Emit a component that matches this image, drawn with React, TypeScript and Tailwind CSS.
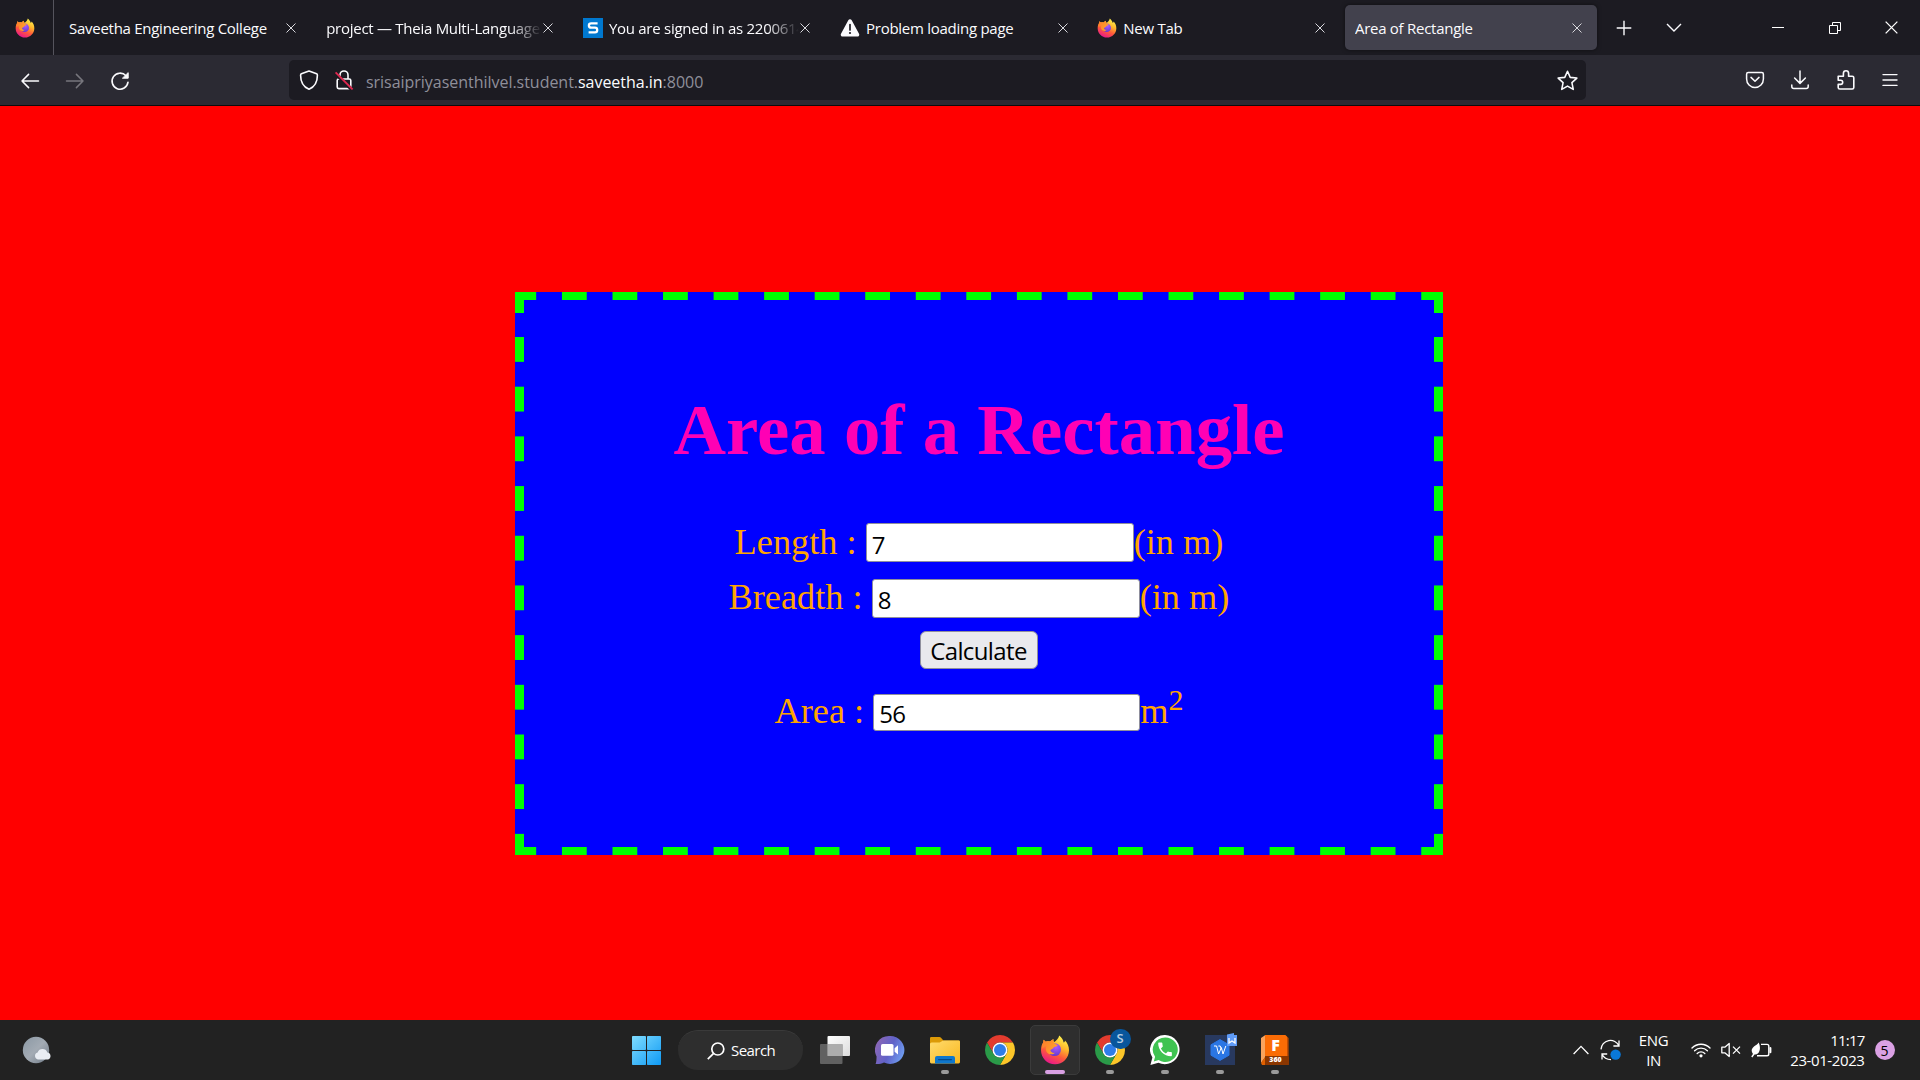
import type { ReactNode } from "react";

function FirefoxLogo({ className }: { className: string }) {
  return (
    <svg viewBox="0 0 30 30" className={className}>
      <defs>
        <linearGradient id="fxBody" x1="0.8" y1="0.05" x2="0.35" y2="1">
          <stop offset="0" stopColor="#fff44f" />
          <stop offset="0.35" stopColor="#ffb62b" />
          <stop offset="0.65" stopColor="#ff5a3a" />
          <stop offset="1" stopColor="#e8178b" />
        </linearGradient>
        <radialGradient id="fxCore" cx="0.6" cy="0.3" r="0.8">
          <stop offset="0" stopColor="#a95cff" />
          <stop offset="1" stopColor="#5b35c9" />
        </radialGradient>
        <linearGradient id="fxHead" x1="0" y1="0" x2="1" y2="0.6">
          <stop offset="0" stopColor="#ff7a2a" />
          <stop offset="1" stopColor="#ffa52b" />
        </linearGradient>
      </defs>
      <path
        d="M19.2 0.6C22 3 23.4 5.4 23.6 7.6C24.6 7 25 6.2 25 5.4C27.6 8 29 11.6 29 15.2C29 23 22.8 29.2 15 29.2C7.2 29.2 1 23 1 15.2C1 12 1.8 9.6 3.2 7.6L3.6 4.8L5.8 6.8C7 6.2 8.8 6.2 10 6.6C11.4 5 12.6 4.4 13.6 4.2C13.2 5.2 13.4 6.4 14.4 7C15.8 6 18.6 4 19.2 0.6Z"
        fill="url(#fxBody)"
      />
      <circle cx="14.6" cy="14.6" r="6.4" fill="url(#fxCore)" />
      <path
        d="M3.6 4.8L5.8 6.8C7.2 6.2 8.8 6.2 10 6.6C11.4 5 12.6 4.4 13.6 4.2C13 5.4 13.2 7 14.6 8.4C15.6 9.4 17.4 9.6 17.6 10.2C17.4 11.6 14.4 11.6 13.8 12.2C13.6 13.8 11.4 14 10.4 15C10.6 17 12.6 18.2 14.8 17.8C13 20.4 8 19.6 6.4 16.4C5.4 14 6 11.6 7 10.4C5 10.6 3.4 12 2.4 14C2 11 2.4 9 3.2 7.6Z"
        fill="url(#fxHead)"
      />
    </svg>
  );
}

function ChromeLogo({ className }: { className: string }) {
  return (
    <svg viewBox="0 0 48 48" className={className}>
      <path d="M24 12H44.78A24 24 0 0 0 3.22 12L13.6 30A12 12 0 0 1 24 12Z" fill="#e33b2e" />
      <path d="M34.4 30L24 48A24 24 0 0 0 44.78 12H24A12 12 0 0 1 34.4 30Z" fill="#fcc629" />
      <path d="M13.6 30L3.22 12A24 24 0 0 0 24 48L34.4 30A12 12 0 0 1 13.6 30Z" fill="#2a9a48" />
      <circle cx="24" cy="24" r="12" fill="#fff" />
      <circle cx="24" cy="24" r="9.6" fill="#2f7de9" />
    </svg>
  );
}

function Cross({ className }: { className: string }) {
  return (
    <svg viewBox="0 0 10 10" className={className} fill="none" stroke="currentColor">
      <path d="M0.5 0.5L9.5 9.5M9.5 0.5L0.5 9.5" />
    </svg>
  );
}

function SaveethaIcon() {
  return (
    <svg viewBox="0 0 20 20" className="h-5 w-5 shrink-0">
      <rect width="20" height="20" fill="#0078cf" />
      <path
        d="M14.6 5.4H8.2C6.6 5.4 5.9 6.2 5.9 7.5C5.9 9 6.7 9.7 8.2 9.7H12C13.5 9.7 14.2 10.5 14.2 12C14.2 13.5 13.5 14.4 12 14.4H5.6"
        fill="none"
        stroke="#fff"
        strokeWidth="2.3"
      />
    </svg>
  );
}

function WarningIcon() {
  return (
    <svg viewBox="0 0 20 20" className="h-5 w-5 shrink-0">
      <path d="M8.3 2.2a1.9 1.9 0 0 1 3.4 0l7.3 13.6a1.9 1.9 0 0 1-1.7 2.8H2.7A1.9 1.9 0 0 1 1 15.8z" fill="#fbfbfe" />
      <path d="M10 6.5v5.4" stroke="#1c1b22" strokeWidth="1.7" strokeLinecap="round" />
      <circle cx="10" cy="15" r="1.1" fill="#1c1b22" />
    </svg>
  );
}

function Tab({ title, icon, active, fade }: { title: string; icon?: ReactNode; active?: boolean; fade?: boolean }) {
  return (
    <div
      className={`flex h-[45px] w-[252px] shrink-0 items-center rounded-[5px] pr-[15px] pl-[10px] ${active ? "bg-[#42414d] shadow-[0_0_4px_rgba(0,0,0,0.5)]" : ""}`}
    >
      {icon && <span className="mr-[6px] -ml-[0.5px] flex shrink-0 items-center">{icon}</span>}
      <span
        className={`min-w-0 flex-1 overflow-hidden text-[15px] leading-5 tracking-[-0.27px] whitespace-nowrap ${fade ? "[mask-image:linear-gradient(to_left,transparent,black_32px)]" : ""}`}
      >
        {title}
      </span>
      <Cross className="ml-px h-[10px] w-[10px] shrink-0 text-[#d8d8dd]" />
    </div>
  );
}

function BrowserTabs() {
  return (
    <div className="flex h-[55px] shrink-0 items-center bg-[#1c1b22]">
      <div className="mr-[5px] flex h-full w-[54px] items-center border-r border-[#55545d] pl-[15px]">
        <FirefoxLogo className="h-5 w-5" />
      </div>
      <div className="flex gap-[5.2px]">
        <Tab title="Saveetha Engineering College" />
        <Tab title="project — Theia Multi-Language" fade />
        <Tab title="You are signed in as 22006142" icon={<SaveethaIcon />} fade />
        <Tab title="Problem loading page" icon={<WarningIcon />} />
        <Tab title="New Tab" icon={<FirefoxLogo className="h-5 w-5" />} />
        <Tab title="Area of Rectangle" active />
      </div>
      <svg viewBox="0 0 16 16" className="ml-[19px] h-4 w-4 shrink-0" stroke="#fbfbfe" strokeWidth="1.4">
        <path d="M8 0.7V15.3M0.7 8H15.3" />
      </svg>
      <svg viewBox="0 0 16 16" className="ml-[34.5px] h-4 w-4 shrink-0" stroke="#fbfbfe" strokeWidth="1.4" fill="none">
        <path d="M1 4L8 11L15 4" />
      </svg>
      <svg viewBox="0 0 14 14" className="mt-[-2px] ml-[89px] h-[14px] w-[14px] shrink-0" stroke="#fff">
        <path d="M1 7.5H13" />
      </svg>
      <svg viewBox="0 0 14 14" className="ml-[43px] h-[14px] w-[14px] shrink-0" stroke="#fff" fill="none">
        <path d="M1.5 4.5H9.5V12.5H1.5Z" />
        <path d="M4.5 4V1.5H12.5V9.5H10" />
      </svg>
      <Cross className="ml-[42.5px] h-[13px] w-[13px] shrink-0 text-white" />
    </div>
  );
}

function BrowserToolbar() {
  return (
    <div className="flex h-[51px] shrink-0 items-center border-b border-[#0c0c0d] bg-[#2b2a33] text-[#fbfbfe]">
      <svg viewBox="0 0 20 20" className="mt-px ml-5 h-5 w-5 shrink-0" fill="none" stroke="currentColor" strokeWidth="1.5" strokeLinecap="round" strokeLinejoin="round">
        <path d="M8.6 3.4L2 10L8.6 16.6M2 10H18.5" />
      </svg>
      <svg viewBox="0 0 20 20" className="mt-px ml-[25px] h-5 w-5 shrink-0 text-[#77767d]" fill="none" stroke="currentColor" strokeWidth="1.5" strokeLinecap="round" strokeLinejoin="round">
        <path d="M11.4 3.4L18 10L11.4 16.6M18 10H1.5" />
      </svg>
      <svg viewBox="0 0 20 20" className="mt-px ml-[25px] h-5 w-5 shrink-0" fill="none" stroke="currentColor" strokeWidth="1.6" strokeLinecap="round">
        <path d="M18 11.2A8 8 0 1 1 16 4.8" />
        <path d="M18.2 2V7.2H12.8Z" fill="currentColor" strokeWidth="1" strokeLinejoin="round" />
      </svg>
      <div className="ml-[159px] flex h-10 w-[1297px] shrink-0 items-center rounded-[5px] bg-[#1c1b22]">
        <svg viewBox="0 0 20 20" className="ml-[10px] h-5 w-5 shrink-0" fill="none" stroke="currentColor" strokeWidth="1.6" strokeLinejoin="round">
          <path d="M10 1L17.6 3.8C18.3 4.1 18.4 4.6 18.4 5.2C18.4 12 15.4 17 10 19.2C4.6 17 1.6 12 1.6 5.2C1.6 4.6 1.7 4.1 2.4 3.8Z" />
        </svg>
        <svg viewBox="0 0 20 20" className="ml-[15px] h-5 w-5 shrink-0" fill="none" stroke="currentColor" strokeWidth="1.6">
          <rect x="3.2" y="9" width="13.6" height="9.6" rx="1.6" />
          <path d="M6 9V5A4 4 0 0 1 14 5V9" />
          <path d="M1.2 3.2L17 18.8" stroke="#1c1b22" strokeWidth="3.4" />
          <path d="M1.6 2.4L18.6 19.4" stroke="#e22850" strokeWidth="1.9" />
        </svg>
        <div className="ml-[12px] flex-1 pt-[3px] text-[16px] leading-5 tracking-[-0.03px] whitespace-nowrap text-[#8f8f9a]">
          srisaipriyasenthilvel.student.<span className="text-[#fbfbfe]">saveetha.in</span>:8000
        </div>
        <svg viewBox="0 0 20 20" className="mr-[8px] h-[21px] w-[21px] shrink-0" fill="none" stroke="currentColor" strokeWidth="1.5" strokeLinejoin="round">
          <path d="M10 1.2L12.6 7L18.9 7.7L14.2 12L15.5 18.5L10 15.3L4.5 18.5L5.8 12L1.1 7.7L7.4 7Z" />
        </svg>
      </div>
      <svg viewBox="0 0 20 20" className="ml-[159px] h-5 w-5 shrink-0" fill="none" stroke="currentColor" strokeWidth="1.5" strokeLinecap="round" strokeLinejoin="round">
        <path d="M3.2 2.6H16.8Q18.4 2.6 18.4 4.2V9A8.4 8.4 0 0 1 1.6 9V4.2Q1.6 2.6 3.2 2.6Z" />
        <path d="M6 7.4L10 11.2L14 7.4" />
      </svg>
      <svg viewBox="0 0 20 20" className="ml-[24.5px] h-5 w-5 shrink-0" fill="none" stroke="currentColor" strokeWidth="1.5" strokeLinecap="round" strokeLinejoin="round">
        <path d="M10 1V13M4.6 8L10 13.4L15.4 8M1.8 15V16.4Q1.8 18.4 3.8 18.4H16.2Q18.2 18.4 18.2 16.4V15" />
      </svg>
      <svg viewBox="0 0 20 20" className="ml-[26.5px] h-5 w-5 shrink-0" fill="none" stroke="currentColor" strokeWidth="1.6" strokeLinejoin="round">
        <path d="M2.2 6.2H7.4V3.4A2.6 2.6 0 0 1 12.6 3.4V6.2H16.2Q17.8 6.2 17.8 7.8V17.4Q17.8 19 16.2 19H3.8Q2.2 19 2.2 17.4V14.4H4.6A2 2 0 0 0 4.6 10.2H2.2Z" />
      </svg>
      <svg viewBox="0 0 16 16" className="mt-[-1px] ml-[26px] h-4 w-4 shrink-0" stroke="currentColor" strokeWidth="1.4" strokeLinecap="round">
        <path d="M1 2.6H15M1 8H15M1 13.4H15" />
      </svg>
    </div>
  );
}

const fieldClass =
  "block rounded-[3px] border border-[#8f8f9d] bg-white pl-[5px] font-['Open_Sans',sans-serif] text-[24px] leading-8 tracking-[-0.7px] text-black outline-none";

function AreaCard() {
  return (
    <div className="flex h-[563px] w-[928px] flex-col items-center bg-[#0000ff] bg-[image:linear-gradient(#00ff00,#00ff00),linear-gradient(#00ff00,#00ff00),linear-gradient(#00ff00,#00ff00),linear-gradient(#00ff00,#00ff00),linear-gradient(90deg,#00ff00_25px,transparent_25px),linear-gradient(90deg,#00ff00_25px,transparent_25px),linear-gradient(#00ff00_25px,transparent_25px),linear-gradient(#00ff00_25px,transparent_25px)] bg-[size:9px_21px,9px_21px,9px_21px,9px_21px,50.55px_8px,50.55px_8px,9px_49.7px,9px_49.7px] bg-[position:left_top,right_top,left_bottom,right_bottom,-3.6px_0,-3.6px_100%,0_-4.7px,100%_-4.7px] pt-[96px] font-['Liberation_Serif',serif] text-[36.3px] leading-[38px] text-[#ffa500] [background-repeat:no-repeat,no-repeat,no-repeat,no-repeat,repeat-x,repeat-x,repeat-y,repeat-y]">
      <h1 className="h-[84px] text-[72.8px] leading-[84px] font-bold whitespace-nowrap text-[#ff00b4]">Area of a Rectangle</h1>
      <label className="mt-[51px] flex h-[39px] items-center">
        <span className="-mt-[2px] whitespace-pre">Length : </span>
        <input className={`${fieldClass} h-[39px] w-[268px] pt-[3px]`} defaultValue="7" />
        <span className="-mt-[2px]">(in m)</span>
      </label>
      <label className="mt-[17px] flex h-[39px] items-center">
        <span className="-mt-[3px] whitespace-pre">Breadth : </span>
        <input className={`${fieldClass} h-[39px] w-[268px] pt-px`} defaultValue="8" />
        <span className="-mt-[3px]">(in m)</span>
      </label>
      <button className="mt-[13px] flex h-[38px] w-[118px] items-center justify-center rounded-[6px] border border-[#8f8f9d] bg-[#e9e9ed] pt-[2px] pr-px font-['Open_Sans',sans-serif] text-[24px] tracking-[-0.62px] text-black">
        Calculate
      </button>
      <label className="mt-[25px] flex h-[37px] items-center">
        <span className="-mt-[3px] whitespace-pre">Area : </span>
        <input className={`${fieldClass} h-[37px] w-[267px] pt-px`} defaultValue="56" />
        <span className="-mt-[3px] flex">
          m<span className="-mt-[11px] text-[30px]">2</span>
        </span>
      </label>
    </div>
  );
}

function TaskItem({ children, running }: { children: ReactNode; running?: boolean }) {
  return (
    <div className="flex h-[60px] w-[55px] shrink-0 flex-col items-center pt-[15px]">
      <div className="relative h-[30px] w-[30px]">{children}</div>
      {running && <div className="mt-[5px] h-[4px] w-2 rounded-full bg-[#9a9a9a]" />}
    </div>
  );
}

function Taskbar() {
  return (
    <div className="flex h-[60px] shrink-0 items-center bg-[#222222] text-[15px] text-white">
      <svg viewBox="0 0 30 28" className="ml-[22px] h-[28px] w-[30px] shrink-0">
        <defs>
          <linearGradient id="moon" x1="0" y1="0" x2="1" y2="1">
            <stop offset="0" stopColor="#8b98a4" />
            <stop offset="0.5" stopColor="#a3abb4" />
            <stop offset="1" stopColor="#6f7a86" />
          </linearGradient>
        </defs>
        <circle cx="14" cy="14" r="13.2" fill="url(#moon)" />
        <path d="M16 23.4A3.6 3.6 0 0 1 15.6 16.4A5.2 5.2 0 0 1 25.4 16.4A3.6 3.6 0 0 1 26 23.4Z" fill="#e9edf3" />
      </svg>
      <svg viewBox="0 0 29 29" className="ml-[580px] h-[29px] w-[29px] shrink-0">
        <defs>
          <linearGradient id="win" x1="0" y1="0" x2="29" y2="29" gradientUnits="userSpaceOnUse">
            <stop offset="0" stopColor="#7fdcff" />
            <stop offset="1" stopColor="#0f9af4" />
          </linearGradient>
        </defs>
        <rect width="14" height="14" rx="0.8" fill="url(#win)" />
        <rect x="15" width="14" height="14" rx="0.8" fill="url(#win)" />
        <rect y="15" width="14" height="14" rx="0.8" fill="url(#win)" />
        <rect x="15" y="15" width="14" height="14" rx="0.8" fill="url(#win)" />
      </svg>
      <div className="ml-[17px] flex h-10 w-[125px] shrink-0 items-center rounded-full border-t border-[#3a3a3a] bg-[#2e2e2e] pl-[29px]">
        <svg viewBox="0 0 18 18" className="h-[18px] w-[18px]" fill="none" stroke="#fff" strokeWidth="1.7">
          <circle cx="10.8" cy="7" r="6" />
          <path d="M6.6 11.4L0.8 17.2" />
        </svg>
        <span className="ml-[6px] tracking-[-0.55px]">Search</span>
      </div>
      <div className="ml-[4px] flex h-[60px]">
        <TaskItem>
          <svg viewBox="0 0 30 30" className="h-[30px] w-[30px]">
            <defs>
              <linearGradient id="taskView" x1="0" y1="0" x2="1" y2="1">
                <stop offset="0" stopColor="#ffffff" />
                <stop offset="1" stopColor="#dcdcdc" />
              </linearGradient>
            </defs>
            <rect x="7.5" y="1" width="22.5" height="20" rx="1" fill="url(#taskView)" />
            <rect x="0" y="9" width="22.5" height="20" rx="1" fill="#6c6c6c" fillOpacity="0.85" />
            <rect x="7.5" y="9" width="15" height="12" fill="#adadad" />
          </svg>
        </TaskItem>
        <TaskItem>
          <svg viewBox="0 0 30 30" className="h-[30px] w-[30px]">
            <defs>
              <linearGradient id="chat" x1="0" y1="0.2" x2="1" y2="0.6">
                <stop offset="0" stopColor="#8f67b4" />
                <stop offset="0.55" stopColor="#6062c8" />
                <stop offset="1" stopColor="#6f9df0" />
              </linearGradient>
            </defs>
            <path d="M15 1A14.2 14 0 1 1 9 27.6C6.4 29 3 29.2 0.6 29C1.6 26.4 1.4 24.4 1.6 21.4A14.2 14 0 0 1 15 1Z" fill="url(#chat)" />
            <rect x="6" y="9" width="12.5" height="11.8" rx="1.6" fill="#fff" />
            <path d="M19.6 13.2L23 10.2V19.6L19.6 16.8Z" fill="#fff" />
          </svg>
        </TaskItem>
        <TaskItem running>
          <svg viewBox="0 0 30 30" className="h-[30px] w-[30px]">
            <defs>
              <linearGradient id="folder" x1="0" y1="0" x2="1" y2="1">
                <stop offset="0" stopColor="#ffdb6e" />
                <stop offset="1" stopColor="#f9b81f" />
              </linearGradient>
            </defs>
            <path d="M0 3.2Q0 2 1.2 2H9.4Q10.4 2 11 2.8L13.4 5.4H28.6Q30 5.4 30 6.8V12H0Z" fill="#dc9a07" />
            <path d="M0 9Q0 7.4 1.6 7.4H9.6Q10.6 7.4 11.4 6.6Q12.6 5.4 13.8 5.4H28.6Q30 5.4 30 6.8V27Q30 28.4 28.6 28.4H1.4Q0 28.4 0 27Z" fill="url(#folder)" />
            <path d="M5 28.4V23Q5 21 7 21H23Q25 21 25 23V28.4Z" fill="#0f77cc" />
            <path d="M8.6 24.6H21.4" stroke="#064a8a" strokeWidth="1.2" strokeLinecap="round" />
          </svg>
        </TaskItem>
        <TaskItem>
          <ChromeLogo className="h-[30px] w-[30px]" />
        </TaskItem>
        <div className="flex w-[55px] justify-center pt-[5px]">
          <div className="flex h-[50px] w-[50px] flex-col items-center rounded-[5px] border border-[#3b3b3b] bg-[#2e2e2e] pt-[9px]">
            <FirefoxLogo className="h-[30px] w-[30px]" />
            <div className="mt-[5px] h-[4px] w-5 shrink-0 rounded-full bg-[#d9a0e3]" />
          </div>
        </div>
        <TaskItem running>
          <ChromeLogo className="h-[30px] w-[30px]" />
          <div className="absolute -top-[6px] left-[15px] flex h-5 w-[21px] items-center justify-center rounded-full bg-[#08569c] text-[13px] font-semibold text-[#b5cde2]">
            S
          </div>
        </TaskItem>
        <TaskItem running>
          <svg viewBox="0 0 30 30" className="h-[30px] w-[30px]">
            <path d="M15.2 0A14.8 14.6 0 1 1 8.4 27.8L0.4 30L2.4 22.4A14.8 14.6 0 0 1 15.2 0Z" fill="#fff" />
            <path d="M15.2 2.4A12.4 12.3 0 1 1 8.6 25L3.8 26.4L5.1 21.8A12.4 12.3 0 0 1 15.2 2.4Z" fill="#3fc351" />
            <path
              transform="translate(5.9 5.3) scale(0.76)"
              d="M6.62 10.79c1.44 2.83 3.76 5.14 6.59 6.59l2.2-2.2c.27-.27.67-.36 1.02-.24 1.12.37 2.33.57 3.57.57.55 0 1 .45 1 1V20c0 .55-.45 1-1 1-9.39 0-17-7.61-17-17 0-.55.45-1 1-1h3.5c.55 0 1 .45 1 1 0 1.25.2 2.45.57 3.57.11.35.03.74-.25 1.02l-2.2 2.2z"
              fill="#fff"
            />
          </svg>
        </TaskItem>
        <TaskItem running>
          <svg viewBox="0 0 34 32" className="absolute -top-[2px] left-0 h-[32px] w-[34px]">
            <rect y="2" width="30" height="30" fill="#28395f" />
            <path d="M15 6.6L24 11.8V22.2L15 27.4L6 22.2V11.8Z" fill="#2a76e4" strokeLinejoin="round" stroke="#2a76e4" />
            <path d="M9 13H11.6L13.6 21L16.4 14.6L18 21L20.8 13M13.4 13H15.2L16.4 16.4" fill="none" stroke="#fff" strokeWidth="1" />
            <path d="M22 1.6L29 0V2H32V13H22Z" fill="#5f9bf7" />
            <path d="M24 5V10L27 8L30 10V5" fill="none" stroke="#fff" strokeWidth="1.3" />
          </svg>
        </TaskItem>
        <TaskItem running>
          <svg viewBox="0 0 30 30" className="h-[30px] w-[30px]">
            <path d="M1 3L5.4 0V22L1 28Z" fill="#f9a45e" />
            <path d="M5 0H25.4L27 1.6V21H5Z" fill="#fb6c05" />
            <path d="M27 1.6L28.6 3V21H27Z" fill="#c24c00" />
            <rect x="5" y="21" width="24" height="9" rx="0.6" fill="#8a3600" />
            <path d="M1 28L5 22V30H2Z" fill="#e06000" />
          </svg>
          <span className="absolute top-0 left-[5px] w-[22px] text-center text-[16px] leading-[21px] font-extrabold">F</span>
          <span className="absolute top-[20px] left-[5px] w-[22px] text-center text-[7px] leading-[10px] font-extrabold">360</span>
        </TaskItem>
      </div>
      <svg viewBox="0 0 16 10" className="ml-[270.5px] h-[10px] w-4 shrink-0" fill="none" stroke="#fff" strokeWidth="1.3">
        <path d="M0.6 9L8 1.4L15.4 9" />
      </svg>
      <svg viewBox="0 0 21 22" className="ml-[11px] h-[22px] w-[21px] shrink-0" fill="none" stroke="#fff" strokeWidth="1.3">
        <path d="M1 10.4A9.4 9.4 0 0 1 19 7M19 1.4V7H13.4" />
        <path d="M2 20.4V15H7.2M2 15.2Q4.6 20.4 11 20.6" />
        <circle cx="15.6" cy="15.6" r="5.2" fill="#0a78d8" stroke="none" />
      </svg>
      <div className="ml-[15px] w-[36px] shrink-0 text-center leading-5 tracking-[-0.4px]">
        ENG
        <br />
        IN
      </div>
      <svg viewBox="0 0 20 16" className="ml-[19px] h-4 w-5 shrink-0" fill="none" stroke="#fff" strokeWidth="1.4" strokeLinecap="round">
        <path d="M1 6A12.6 12.6 0 0 1 19 6M3.6 8.8A9 9 0 0 1 16.4 8.8M6.2 11.4A5.4 5.4 0 0 1 13.8 11.4" />
        <circle cx="10" cy="13.8" r="1.6" fill="#fff" stroke="none" />
      </svg>
      <svg viewBox="0 0 20 16" className="ml-[10px] h-4 w-5 shrink-0" fill="none" stroke="#fff" strokeWidth="1.3" strokeLinejoin="round">
        <path d="M0.8 5.2H3.8L8.2 1.4V14.6L3.8 10.8H0.8Z" />
        <path d="M12 4.6L19 11.6M19 4.6L12 11.6" />
      </svg>
      <svg viewBox="0 0 21 16" className="ml-[10px] h-4 w-[21px] shrink-0" fill="none" stroke="#fff" strokeWidth="1.4" strokeLinejoin="round">
        <path d="M10 2.4H16Q17.8 2.4 17.8 4.2V12Q17.8 13.8 16 13.8H6" />
        <path d="M19.4 6V10.2" strokeWidth="2" strokeLinecap="round" />
        <path d="M7.6 0.6C9.4 4 9.6 9 6.8 11.6C5.2 13 3.2 12.8 1.8 11.8C-0.2 9 0.6 6.2 3 4.4C4.8 3.2 6.6 2.6 7.6 0.6Z" fill="#fff" stroke="none" />
        <path d="M0.8 15L5 9" stroke="#fff" />
      </svg>
      <div className="ml-[14.5px] w-[78.5px] shrink-0 text-right leading-5 tracking-[-0.4px] whitespace-nowrap">
        <span className="tracking-[-0.8px]">11:17</span>
        <br />
        23-01-2023
      </div>
      <div className="ml-[10px] flex h-5 w-5 shrink-0 items-center justify-center rounded-full bg-[#dba1e4] text-[14px] text-black">5</div>
    </div>
  );
}

export default function App() {
  return (
    <div className="flex h-[1080px] w-[1920px] flex-col overflow-hidden bg-[#ff0000] font-['Open_Sans',sans-serif] text-[#fbfbfe]">
      <BrowserTabs />
      <BrowserToolbar />
      <main className="flex flex-1 items-start pt-[186px] pl-[515px]">
        <AreaCard />
      </main>
      <Taskbar />
    </div>
  );
}
